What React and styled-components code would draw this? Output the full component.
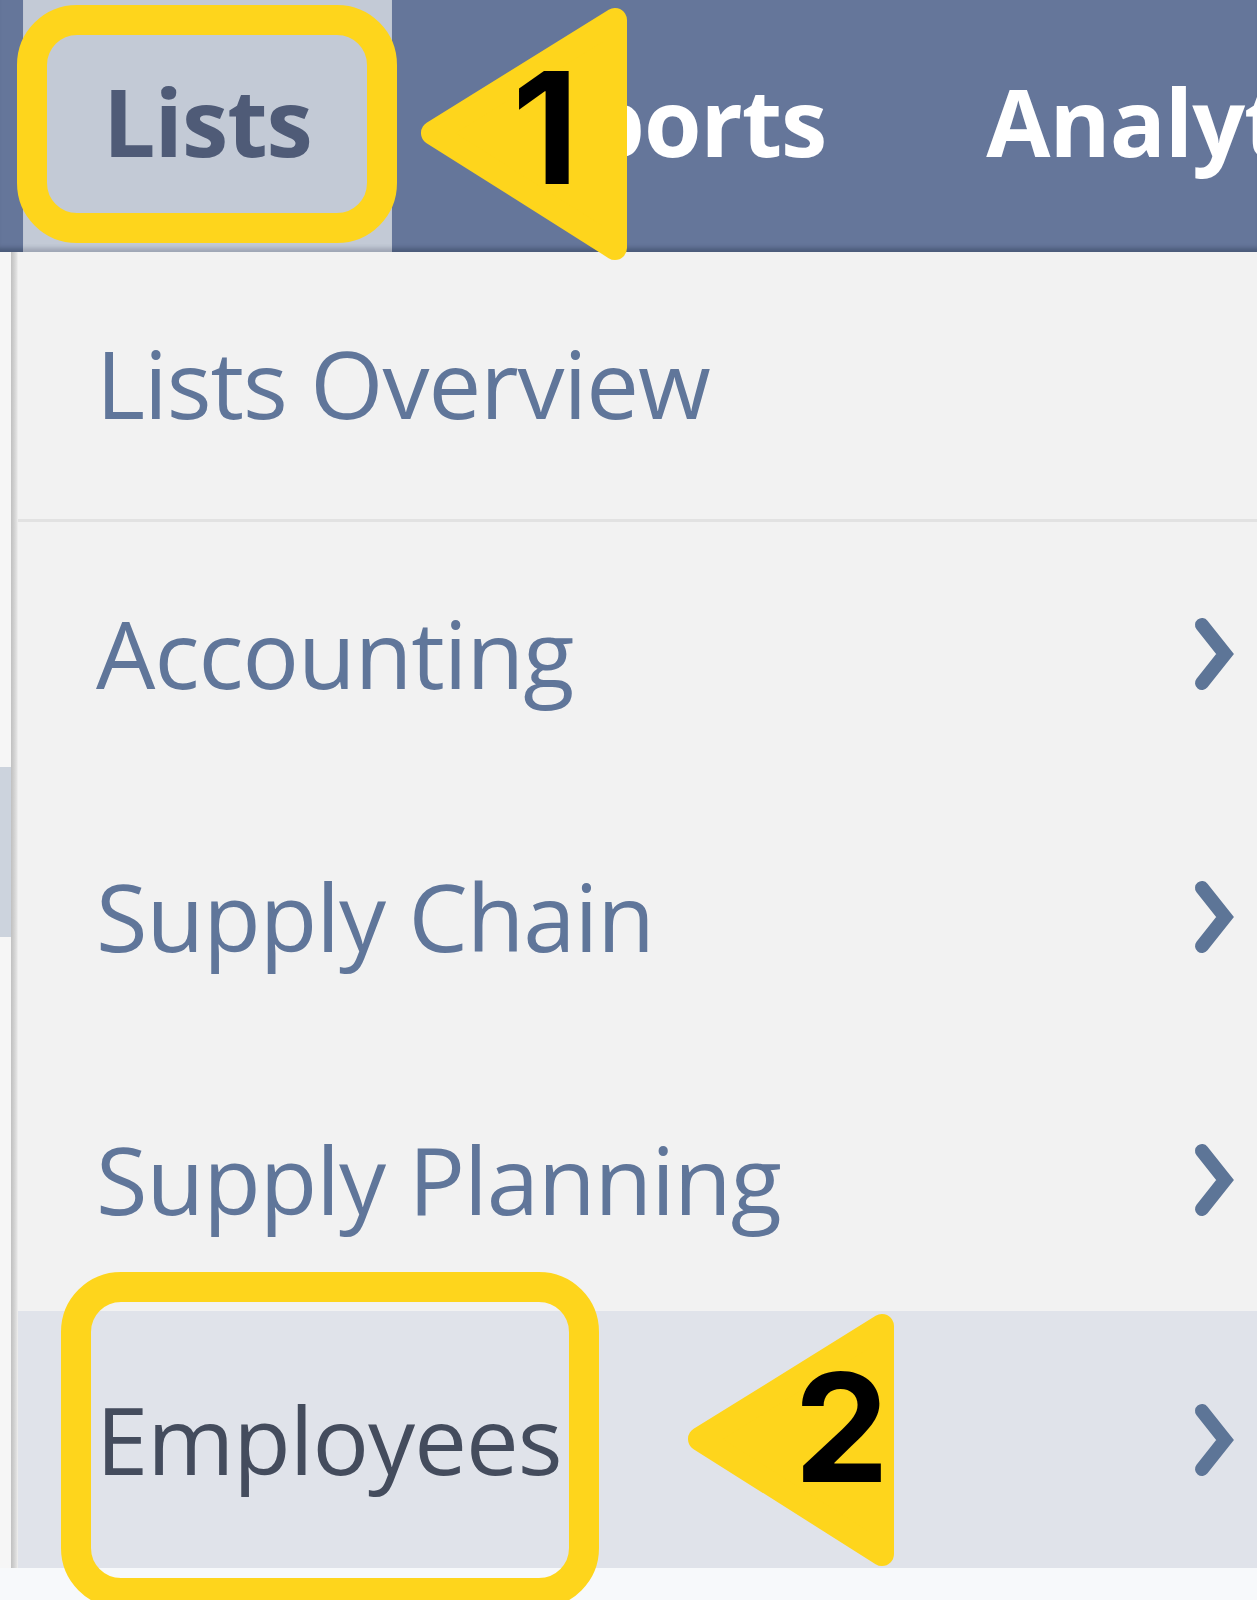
import React from "react";
import styled, { createGlobalStyle } from "styled-components";

const GlobalStyle = createGlobalStyle`
  html, body {
    margin: 0;
    padding: 0;
    background: #f7f9fb;
  }
  body {
    font-family: "Open Sans", "Noto Sans", sans-serif;
  }
`;

const Page = styled.div`
  position: relative;
  width: 1257px;
  height: 1600px;
  overflow: hidden;
  background: #f7f9fb;
`;

const NavBar = styled.nav`
  display: flex;
  height: 252px;
  padding-left: 23px;
  box-sizing: border-box;
  overflow: hidden;
  background: #65769a;
  box-shadow: inset 0 -7px 4px -3px rgba(30, 40, 62, 0.35);
`;

const NavTab = styled.div`
  display: flex;
  align-items: center;
  flex-shrink: 0;
  padding: 0 80px 10px;
  font-weight: 700;
  font-size: 93px;
  letter-spacing: -1px;
  white-space: nowrap;
  color: ${(p) => (p.$active ? "#4f5b77" : "#ffffff")};
  background: ${(p) => (p.$active ? "#c3cad6" : "transparent")};
  box-shadow: ${(p) =>
    p.$active ? "inset 0 -7px 4px -3px rgba(30, 40, 62, 0.22)" : "none"};
`;

const Body = styled.div`
  display: flex;
  align-items: flex-start;
`;

const Gutter = styled.div`
  display: flex;
  flex-direction: column;
  align-self: stretch;
  width: 11px;
  background: #f6f6f6;
`;

const GutterTab = styled.div`
  margin-top: 515px;
  height: 170px;
  background: #ccd3dd;
`;

const Menu = styled.ul`
  flex: 1;
  margin: 0;
  padding: 0 0 0 7px;
  list-style: none;
  background: linear-gradient(
    to right,
    #c0c0c0 0,
    #d0d0d0 3px,
    #e4e4e4 6px,
    #f2f2f2 7px
  );
`;

const MenuRow = styled.li`
  display: flex;
  align-items: center;
  justify-content: space-between;
  box-sizing: border-box;
  height: ${(p) => (p.$active ? 257 : p.$divider ? 270 : 263)}px;
  padding: 0 19px ${(p) => (p.$divider ? 4 : 0)}px 78px;
  border-bottom: ${(p) => (p.$divider ? "3px solid #e2e2e2" : "none")};
  font-size: 94px;
  letter-spacing: -1px;
  line-height: ${(p) => (p.$active ? 257 : 263)}px;
  white-space: nowrap;
  color: ${(p) => (p.$active ? "#444c5d" : "#60769a")};
  background: ${(p) => (p.$active ? "#e0e3ea" : "transparent")};
`;

const ChevronSvg = styled.svg`
  flex-shrink: 0;
  display: block;
  color: #5d7597;
`;

const Chevron = () => (
  <ChevronSvg width="48" height="80" viewBox="0 0 48 80">
    <path
      d="M12 11 L35 40 L12 69"
      fill="none"
      stroke="currentColor"
      strokeWidth="14"
      strokeLinecap="round"
      strokeLinejoin="miter"
    />
  </ChevronSvg>
);

const Highlight = styled.div`
  position: absolute;
  left: ${(p) => p.$x}px;
  top: ${(p) => p.$y}px;
  width: ${(p) => p.$w}px;
  height: ${(p) => p.$h}px;
  box-sizing: border-box;
  border: 30px solid #fed51c;
  border-radius: 60px;
  pointer-events: none;
`;

const Callout = styled.div`
  position: absolute;
  left: ${(p) => p.$x}px;
  top: ${(p) => p.$y}px;
  width: 220px;
  height: 266px;
  pointer-events: none;
`;

const CalloutShape = styled.svg`
  position: absolute;
  inset: 0;
  display: block;
`;

const CalloutNumber = styled.span`
  position: absolute;
  left: ${(p) => p.$x}px;
  top: ${(p) => p.$y}px;
  font-family: Inter, "Liberation Sans", sans-serif;
  font-weight: 700;
  font-size: ${(p) => p.$size}px;
  line-height: 1;
  color: #000000;
`;

const ArrowCallout = ({ x, y, num, nx, ny, size }) => (
  <Callout $x={x} $y={y}>
    <CalloutShape width="220" height="266" viewBox="0 0 220 266">
      <polygon
        points="18,133 200,20 200,248"
        fill="#fed51c"
        stroke="#fed51c"
        strokeWidth="24"
        strokeLinejoin="round"
      />
    </CalloutShape>
    <CalloutNumber $x={nx} $y={ny} $size={size}>
      {num}
    </CalloutNumber>
  </Callout>
);

const items = [
  { label: "Lists Overview", divider: true },
  { label: "Accounting", sub: true },
  { label: "Supply Chain", sub: true },
  { label: "Supply Planning", sub: true },
  { label: "Employees", sub: true, active: true },
];

export default function App() {
  return (
    <>
      <GlobalStyle />
      <Page>
        <NavBar>
          <NavTab $active>Lists</NavTab>
          <NavTab>Reports</NavTab>
          <NavTab>Analytics</NavTab>
        </NavBar>
        <Body>
          <Gutter>
            <GutterTab />
          </Gutter>
          <Menu>
            {items.map((it) => (
              <MenuRow key={it.label} $divider={it.divider} $active={it.active}>
                <span>{it.label}</span>
                {it.sub && <Chevron />}
              </MenuRow>
            ))}
          </Menu>
        </Body>

        <Highlight $x={17} $y={5} $w={380} $h={238} />
        <ArrowCallout x={415} y={0} num="1" nx={97} ny={50} size={155} />

        <Highlight $x={61} $y={1272} $w={538} $h={336} />
        <ArrowCallout x={682} y={1306} num="2" nx={112} ny={46} size={151} />
      </Page>
    </>
  );
}
